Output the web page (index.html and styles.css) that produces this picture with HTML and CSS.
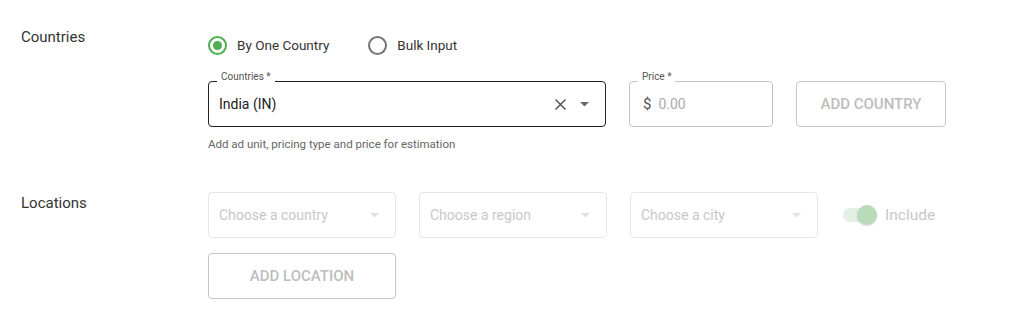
FILE: index.html
```html
<!DOCTYPE html>
<html>
<head>
<meta charset="utf-8">
<link rel="stylesheet" href="styles.css">
</head>
<body>
<div class="page">
  <section class="row row-countries">
    <div class="row-label">Countries</div>
    <div class="row-body">
      <div class="radios">
        <label class="radio checked"><span class="radio-circle"><span class="radio-dot"></span></span>By One Country</label>
        <label class="radio"><span class="radio-circle"></span>Bulk Input</label>
      </div>
      <div class="fields">
        <div class="field field-country">
          <span class="field-legend">Countries *</span>
          <span class="field-value">India (IN)</span>
          <span class="field-icons">
            <svg class="icon-clear" width="13" height="13" viewBox="0 0 13 13"><path d="M1.5 1.5 L11.5 11.5 M11.5 1.5 L1.5 11.5" stroke="#555" stroke-width="1.5" fill="none"/></svg>
            <svg class="icon-caret" width="9" height="5" viewBox="0 0 9 5"><path d="M0 0 L9 0 L4.5 4.5 Z" fill="#666"/></svg>
          </span>
        </div>
        <div class="field field-price">
          <span class="field-legend">Price *</span>
          <span class="price-sign">$</span>
          <span class="field-placeholder">0.00</span>
        </div>
        <button class="btn btn-country">ADD COUNTRY</button>
      </div>
      <div class="helper">Add ad unit, pricing type and price for estimation</div>
    </div>
  </section>
  <section class="row row-locations">
    <div class="row-label">Locations</div>
    <div class="row-body">
      <div class="fields">
        <div class="field select disabled"><span class="field-placeholder">Choose a country</span><svg class="icon-caret" width="9" height="5" viewBox="0 0 9 5"><path d="M0 0 L9 0 L4.5 4.5 Z" fill="#e0e0e0"/></svg></div>
        <div class="field select disabled"><span class="field-placeholder">Choose a region</span><svg class="icon-caret" width="9" height="5" viewBox="0 0 9 5"><path d="M0 0 L9 0 L4.5 4.5 Z" fill="#e0e0e0"/></svg></div>
        <div class="field select disabled"><span class="field-placeholder">Choose a city</span><svg class="icon-caret" width="9" height="5" viewBox="0 0 9 5"><path d="M0 0 L9 0 L4.5 4.5 Z" fill="#e0e0e0"/></svg></div>
        <div class="toggle"><span class="toggle-track"><span class="toggle-thumb"></span></span><span class="toggle-label">Include</span></div>
      </div>
      <button class="btn btn-location">ADD LOCATION</button>
    </div>
  </section>
</div>
</body>
</html>
```

FILE: styles.css
```css
* { box-sizing: border-box; }
html, body { margin: 0; padding: 0; background: #fff; }
body { font-family: Roboto, "Liberation Sans", Arial, sans-serif; color: #333; }
.page { padding: 26px 0 0 21px; width: 1024px; height: 320px; }
.row { display: grid; grid-template-columns: 187px 1fr; }
.row-label { font-size: 15px; line-height: 20px; color: #333; padding-top: 1px; }
.radios { display: flex; gap: 39px; height: 38px; padding-top: 9px; }
.radio { display: flex; align-items: center; gap: 10px; font-size: 13.5px; color: #333; height: 20px; }
.radio-circle { width: 19px; height: 19px; border-radius: 50%; border: 2px solid #757575; display: flex; align-items: center; justify-content: center; }
.radio.checked .radio-circle { border-color: #4caf50; }
.radio-dot { width: 9px; height: 9px; border-radius: 50%; background: #4caf50; }
.fields { display: flex; gap: 23px; align-items: center; margin-top: 17px; }
.field { position: relative; height: 46px; border: 1px solid #c4c4c4; border-radius: 4px; display: flex; align-items: center; padding: 0 10px; font-size: 14px; }
.field-country { width: 398px; border-color: #222; }
.field-price { width: 144px; }
.field-legend { position: absolute; top: -11px; left: 8px; padding: 0 4px; background: #fff; font-size: 10px; line-height: 12px; color: #555; }
.field-value { flex: 1; color: #222; }
.field-icons { display: flex; align-items: center; gap: 13px; padding-right: 6px; }
.price-sign { font-size: 15px; color: #555; margin-left: 3px; margin-right: 7px; }
.field-placeholder { color: #aaa; }
.btn { height: 46px; border: 1px solid #c8c8c8; border-radius: 4px; background: #fff; font-family: Roboto, "Liberation Sans", Arial, sans-serif; font-size: 15px; font-weight: 500; color: #bdbdbd; padding: 0; }
.btn-country { width: 150px; }
.helper { font-size: 11.5px; color: #666; margin-top: 11px; line-height: 13px; }
.row-locations { margin-top: 41px; }
.row-locations .fields { margin-top: 0; }
.select { width: 188px; height: 46px; border-color: #e6e6e6; justify-content: space-between; padding-right: 16px; }
.select .field-placeholder { color: #c8c8c8; }
.toggle { display: flex; align-items: center; gap: 8px; margin-left: 2px; }
.toggle-track { position: relative; width: 34px; height: 14px; border-radius: 7px; background: #e3efe3; }
.toggle-thumb { position: absolute; right: 0; top: -3px; width: 20px; height: 20px; border-radius: 50%; background: #b9dbb9; box-shadow: 0 1px 2px rgba(0,0,0,0.15); }
.toggle-label { font-size: 15.5px; color: #c8c8c8; }
.btn-location { width: 188px; margin-top: 15px; }
```
